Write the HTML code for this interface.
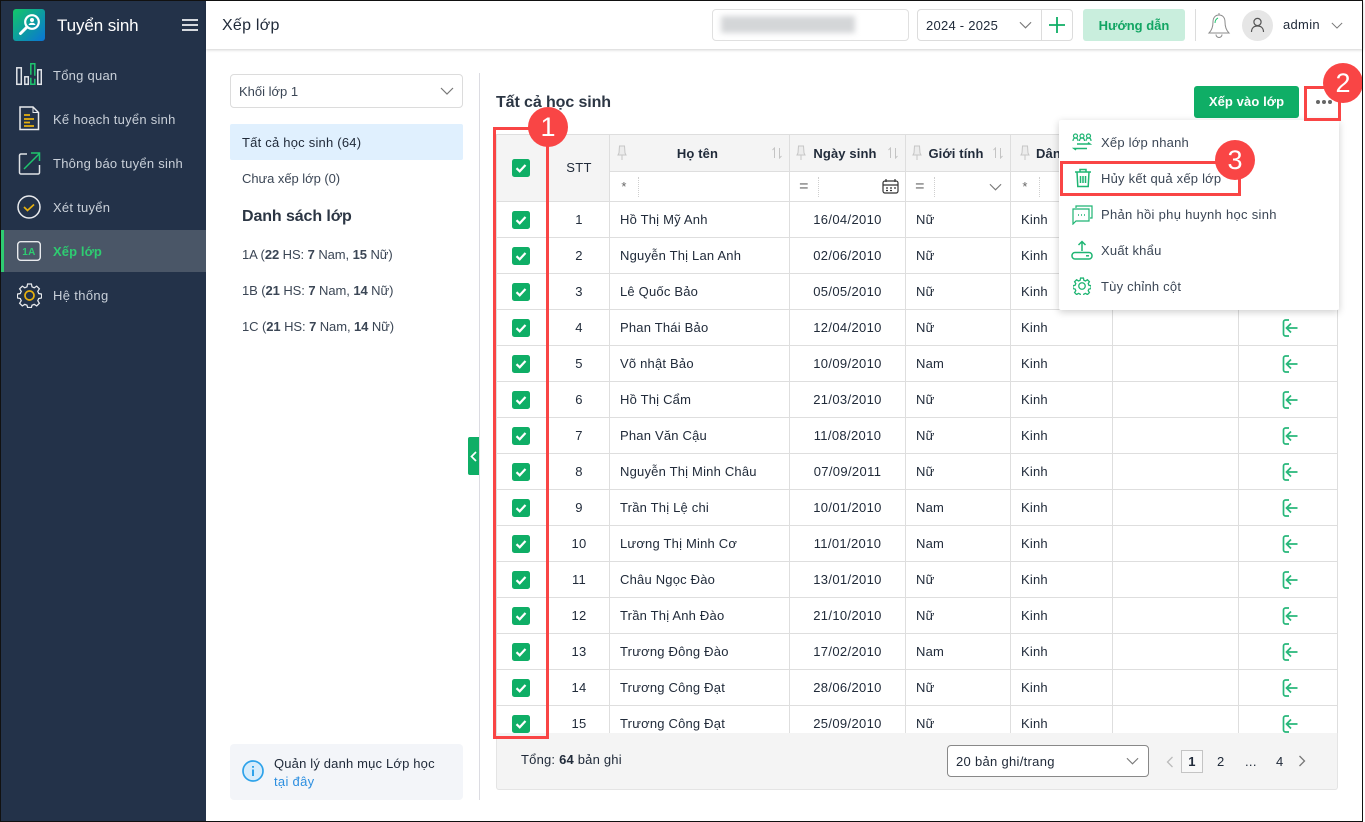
<!DOCTYPE html>
<html lang="vi"><head><meta charset="utf-8"><title>Xếp lớp</title>
<style>
*{box-sizing:border-box}
html,body{margin:0;padding:0;background:#fff}
body{width:1365px;height:822px;position:relative;overflow:hidden;font:13px/24px "Liberation Sans","Noto Sans CJK SC",sans-serif;color:#212b3a;letter-spacing:.3px}
.a{position:absolute;white-space:nowrap}
.side{left:1px;top:1px;width:205px;height:820px;background:#233249}
.nav{left:53px;color:#c9d0d9;letter-spacing:.25px}
table{border-collapse:separate;border-spacing:0;table-layout:fixed;width:841px;position:absolute;left:0;top:0}
td,th{border-right:1px solid #dedede;border-bottom:1px solid #dedede;padding:0;font-weight:400;height:36px;position:relative;white-space:nowrap;overflow:hidden}
th{background:#f4f4f4;height:37px}
th b{position:relative;top:1px;letter-spacing:.12px}
td.c{text-align:center}
td.p{padding-left:10px;letter-spacing:.2px}
td.d{text-align:center;letter-spacing:.35px}
td svg,th svg{position:absolute}
tr.f td{height:30px;color:#666}
.op{position:absolute;left:0;top:5px;width:29px;height:20px;line-height:20px;text-align:center;border-right:1px dotted #cfcfcf}
.eq{font-size:16px}
.red{position:absolute;border:3px solid #f94545;z-index:20}
.num{position:absolute;width:40px;height:40px;border-radius:50%;background:#f94545;color:#fff;font-size:27px;line-height:40px;text-align:center;z-index:21;letter-spacing:0}
.m{left:1101px;color:#3b4655;letter-spacing:.22px}
.pin{left:6px;top:10px}
.srt{top:12px}
.l{color:#3b4655;letter-spacing:0}
</style></head><body>
<svg width="0" height="0" style="position:absolute"><defs>
<symbol id="ck" viewBox="0 0 18 18"><rect width="18" height="18" rx="2.5" fill="#0fae66"/><path d="M4.5 9.2 7.7 12.3 13.5 6" fill="none" stroke="#fff" stroke-width="2.2"/></symbol>
<symbol id="ex" viewBox="0 0 16 18"><path d="M7 1H3.5A2 2 0 0 0 1.5 3v12a2 2 0 0 0 2 2H7M15.5 9H4.5M9 4.5 4.5 9 9 13.5" fill="none" stroke="#27b77a" stroke-width="1.7"/></symbol>
<symbol id="pn" viewBox="0 0 10 16"><path d="M2.5 1h5l.5 7 1 2H1l1-2zM5 10v5" fill="#ececec" stroke="#c6c6c6"/></symbol>
<symbol id="so" viewBox="0 0 12 12"><path d="M3.500 11V1L1.500 3M8.500 1v10l2-2" fill="none" stroke="#c4c4c4"/></symbol>
<symbol id="dn" viewBox="0 0 14 8"><path d="M1 1l6 6 6-6" fill="none" stroke="#777" stroke-width="1.200"/></symbol>
</defs></svg>

<div class="a" style="left:0;top:0;width:1363px;height:822px;border:1px solid #111;z-index:30;pointer-events:none"></div>

<!-- sidebar -->
<div class="a side"></div>
<svg class="a" style="left:13px;top:9px" width="32" height="32" viewBox="0 0 32 32"><defs><linearGradient id="lg" x1="0" y1="0" x2="1" y2="1"><stop offset="0" stop-color="#12c768"/><stop offset="1" stop-color="#0a74d6"/></linearGradient></defs><rect width="32" height="32" rx="3" fill="url(#lg)"/><circle cx="19" cy="13" r="6.800" fill="none" stroke="#fff" stroke-width="2.200"/><circle cx="19" cy="11" r="2" fill="#fff"/><path d="M15.500 16a3.600 3 0 0 1 7 0z" fill="#fff"/><path d="M14 18 7.500 24.500" stroke="#fff" stroke-width="3" stroke-linecap="round"/></svg>
<div class="a" style="left:57px;top:15px;font-size:17px;line-height:22px;color:#fff;letter-spacing:-.1px">Tuyển sinh</div>
<svg class="a" style="left:181px;top:18px" width="18" height="14"><path d="M1 2h16M1 7h16M1 12h16" stroke="#d5d9df" stroke-width="2"/></svg>

<svg class="a" style="left:16px;top:62px" width="26" height="24" fill="none" stroke="#e2e5e9" stroke-width="1.500"><rect x=".8" y="5.800" width="4.500" height="16.500"/><rect x="8.800" y="14.800" width="3.500" height="7.500"/><rect x="14.800" y="1.800" width="4" height="20.500" stroke="#1fc46e" stroke-dasharray="16 3"/><rect x="21.800" y="7.800" width="3.500" height="14.500"/></svg>
<div class="a nav" style="top:64px">Tổng quan</div>
<svg class="a" style="left:19px;top:106px" width="21" height="25" fill="none"><path d="M1 1h13l5.500 5.500V23.500H1z" stroke="#e8eaed" stroke-width="1.500"/><path d="M14 1v5.500h5.500" stroke="#e8eaed"/><path d="M5 9h6M5 13h10M5 16.500h6M5 20h10" stroke="#e8b10f" stroke-width="1.700"/></svg>
<div class="a nav" style="top:108px">Kế hoạch tuyển sinh</div>
<svg class="a" style="left:18px;top:151px" width="23" height="24" fill="none"><path d="M9 3H3a1.500 1.500 0 0 0-1.500 1.500v17A1.500 1.500 0 0 0 3 23h17a1.500 1.500 0 0 0 1.500-1.500V14" stroke="#dfe2e6" stroke-width="1.500"/><path d="M6 18 21 3M13 2h8.500v8" stroke="#1fc46e" stroke-width="1.500"/></svg>
<div class="a nav" style="top:152px">Thông báo tuyển sinh</div>
<svg class="a" style="left:17px;top:195px" width="24" height="24" fill="none"><circle cx="12" cy="12" r="11" stroke="#e8eaed" stroke-width="1.500"/><path d="M7 12l3.500 3.500L17 9.500" stroke="#e8b10f" stroke-width="1.700"/></svg>
<div class="a nav" style="top:196px">Xét tuyển</div>
<div class="a" style="left:1px;top:230px;width:205px;height:42px;background:#4a5667"></div>
<div class="a" style="left:1px;top:230px;width:3px;height:42px;background:#2ecc71"></div>
<svg class="a" style="left:17px;top:241px" width="24" height="21"><rect x=".7" y=".7" width="22.600" height="18.600" rx="3" fill="none" stroke="#e8eaed" stroke-width="1.400"/><text x="12" y="14" text-anchor="middle" font-family="Liberation Sans" font-size="10" font-weight="700" fill="#2ecc71">1A</text></svg>
<div class="a" style="left:53px;top:240px;color:#2ecc71;font-weight:700;letter-spacing:.1px">Xếp lớp</div>
<svg class="a" style="left:17px;top:283px" width="25" height="25" viewBox="0 0 25 25" fill="none"><path d="M10.500 1.500h4l.6 3 2.300 1 2.600-1.700 2.800 2.800-1.700 2.600 1 2.300 3 .6v4l-3 .6-1 2.300 1.700 2.600-2.800 2.800-2.600-1.700-2.300 1-.6 2.300h-4l-.6-2.300-2.300-1-2.600 1.700-2.800-2.800 1.700-2.600-1-2.300-3-.6v-4l3-.6 1-2.300L2.200 6.600 5 3.800l2.600 1.700 2.300-1z" transform="translate(.5 -.5) scale(.96)" stroke="#e8eaed" stroke-width="1.300"/><circle cx="12.500" cy="12.500" r="4.500" stroke="#e8b10f" stroke-width="1.700"/></svg>
<div class="a nav" style="top:284px;letter-spacing:.35px">Hệ thống</div>

<!-- header -->
<div class="a" style="left:206px;top:1px;width:1157px;height:48px;background:#fff;box-shadow:0 1px 3px rgba(0,0,0,.18);z-index:2"></div>
<div style="position:absolute;z-index:3;left:0;top:0">
<div class="a" style="left:222px;top:15px;font-size:16px;line-height:22px;letter-spacing:.25px">Xếp lớp</div>
<div class="a" style="left:712px;top:9px;width:197px;height:32px;border:1px solid #e0e0e0;border-radius:4px"></div>
<div class="a" style="left:721px;top:16px;width:134px;height:17px;background:#d4d6d8;filter:blur(3px)"></div>
<div class="a" style="left:917px;top:9px;width:156px;height:32px;border:1px solid #dcdcdc;border-radius:4px"></div>
<div class="a" style="left:1041px;top:9px;width:1px;height:32px;background:#dcdcdc"></div>
<div class="a" style="left:926px;top:14px;letter-spacing:.25px">2024 - 2025</div>
<svg class="a" style="left:1019px;top:21px" width="13" height="8"><use href="#dn"/></svg>
<svg class="a" style="left:1049px;top:17px" width="16" height="16"><path d="M8 0v16M0 8h16" stroke="#0fae66" stroke-width="1.800"/></svg>
<div class="a" style="left:1083px;top:9px;width:102px;height:32px;background:#c9eedd;border-radius:3px;color:#12a563;text-align:center;line-height:33px;font-weight:700;letter-spacing:0">Hướng dẫn</div>
<div class="a" style="left:1195px;top:9px;width:1px;height:32px;background:#dcdcdc"></div>
<svg class="a" style="left:1207px;top:12px" width="24" height="27" fill="none" stroke="#8b8b8b"><path d="M12 1v2M12 3c-4 0-6 3-6 7 0 5-1 8-4 11h20c-3-3-4-6-4-11 0-4-2-7-6-7zM9 22.500a3 3 0 0 0 6 0"/><path d="M8 11c0-2 1-4 3-5" stroke="#1fc46e"/></svg>
<div class="a" style="left:1242px;top:10px;width:31px;height:31px;border-radius:50%;background:#e6e6e6"></div>
<svg class="a" style="left:1250px;top:17px" width="15" height="16" fill="none" stroke="#555" stroke-width="1.200"><circle cx="7.500" cy="5" r="3.600"/><path d="M1.500 15c0-4 2.500-6 6-6s6 2 6 6"/></svg>
<div class="a" style="left:1283px;top:13px">admin</div>
<svg class="a" style="left:1331px;top:22px" width="12" height="7"><use href="#dn"/></svg>
</div>

<!-- left panel -->
<div class="a" style="left:230px;top:74px;width:233px;height:34px;border:1px solid #dcdcdc;border-radius:4px"></div>
<div class="a l" style="left:239px;top:80px">Khối lớp 1</div>
<svg class="a" style="left:440px;top:87px" width="14" height="8"><use href="#dn"/></svg>
<div class="a" style="left:230px;top:124px;width:233px;height:36px;background:#e0f0fe;border-radius:2px"></div>
<div class="a" style="left:242px;top:131px;letter-spacing:.22px">Tất cả học sinh (64)</div>
<div class="a l" style="left:242px;top:167px;letter-spacing:-.05px">Chưa xếp lớp (0)</div>
<div class="a" style="left:242px;top:206px;font-size:16px;line-height:22px;font-weight:700;letter-spacing:-.1px;color:#2c3644">Danh sách lớp</div>
<div class="a l" style="left:242px;top:243px;letter-spacing:-.08px">1A (<b>22</b> HS: <b>7</b> Nam, <b>15</b> Nữ)</div>
<div class="a l" style="left:242px;top:279px;letter-spacing:-.08px">1B (<b>21</b> HS: <b>7</b> Nam, <b>14</b> Nữ)</div>
<div class="a l" style="left:242px;top:315px;letter-spacing:-.08px">1C (<b>21</b> HS: <b>7</b> Nam, <b>14</b> Nữ)</div>
<div class="a" style="left:230px;top:744px;width:233px;height:56px;background:#f3f5f9;border-radius:4px"></div>
<svg class="a" style="left:241px;top:759px" width="24" height="24"><circle cx="12" cy="12" r="10" fill="#d7ecfb" stroke="#2da2ea" stroke-width="1.700"/><path d="M12 10.500v6.500M12 7v1.800" stroke="#2da2ea" stroke-width="2"/></svg>
<div class="a" style="left:274px;top:752px;letter-spacing:.17px">Quản lý danh mục Lớp học</div>
<div class="a" style="left:274px;top:770px;color:#2d8fe0">tại đây</div>
<div class="a" style="left:479px;top:73px;width:1px;height:727px;background:#dcdce2"></div>
<div class="a" style="left:468px;top:437px;width:11px;height:38px;background:#0fae66;border-radius:2px 0 0 2px"></div>
<svg class="a" style="left:470px;top:451px" width="7" height="11"><path d="M6 1 1.500 5.500 6 10" fill="none" stroke="#fff" stroke-width="1.700"/></svg>

<!-- main -->
<div class="a" style="left:496px;top:92px;font-size:16px;line-height:22px;font-weight:700;letter-spacing:-.1px;color:#2c3644">Tất cả học sinh</div>
<div class="a" style="left:1194px;top:86px;width:105px;height:32px;background:#0fae66;border-radius:3px;color:#fff;font-weight:700;text-align:center;line-height:32px;letter-spacing:.1px">Xếp vào lớp</div>
<div class="a" style="left:1304px;top:86px;width:36px;height:34px;border:1px solid #ddd;border-radius:3px"></div>
<svg class="a" style="left:1315px;top:99px" width="18" height="6"><g fill="#666"><circle cx="3" cy="3" r="2"/><circle cx="9" cy="3" r="2"/><circle cx="15" cy="3" r="2"/></g></svg>

<div class="a" style="left:496px;top:134px;width:842px;height:599px;overflow:hidden;border-left:1px solid #dedede;border-top:1px solid #dedede">
<table>
<colgroup><col style="width:52px"><col style="width:61px"><col style="width:180px"><col style="width:116px"><col style="width:105px"><col style="width:102px"><col style="width:126px"><col style="width:99px"></colgroup>
<tr>
<th rowspan="2"><svg style="left:15px;top:24px" width="18" height="18"><use href="#ck"/></svg></th>
<th rowspan="2">STT</th>
<th><svg class="pin" width="10" height="16" style="left:7px"><use href="#pn"/></svg><b style="margin-right:4px">Họ tên</b><svg class="srt" style="right:6px" width="12" height="12"><use href="#so"/></svg></th>
<th><svg class="pin" width="10" height="16"><use href="#pn"/></svg><b style="margin-right:5px">Ngày sinh</b><svg class="srt" style="right:6px" width="12" height="12"><use href="#so"/></svg></th>
<th><svg class="pin" width="10" height="16"><use href="#pn"/></svg><b style="margin-right:4px">Giới tính</b><svg class="srt" style="right:6px" width="12" height="12"><use href="#so"/></svg></th>
<th style="text-align:left"><svg class="pin" width="10" height="16" style="left:9px"><use href="#pn"/></svg><b style="margin-left:25px">Dân tộc</b></th>
<th></th><th></th>
</tr>
<tr class="f">
<td><div class="op">*</div></td>
<td><div class="op eq">=</div><svg style="right:6px;top:7px" width="17" height="15" fill="none" stroke="#333" stroke-width="1.200"><rect x="1" y="2" width="15" height="12" rx="2"/><path d="M1 6h15M4 0v3M13 0v3M4 9h2M8 9h2M12 9h2M4 11.500h2M8 11.500h2"/></svg></td>
<td><div class="op eq">=</div><svg style="right:8px;top:11px" width="13" height="8"><use href="#dn"/></svg></td>
<td><div class="op">*</div></td>
<td></td><td></td>
</tr>
<tr><td><svg style="left:15px;top:9px" width="18" height="18"><use href="#ck"/></svg></td><td class="c">1</td><td class="p">Hồ Thị Mỹ Anh</td><td class="d">16/04/2010</td><td class="p">Nữ</td><td class="p">Kinh</td><td></td><td><svg style="left:43px;top:9px" width="16" height="18"><use href="#ex"/></svg></td></tr>
<tr><td><svg style="left:15px;top:9px" width="18" height="18"><use href="#ck"/></svg></td><td class="c">2</td><td class="p">Nguyễn Thị Lan Anh</td><td class="d">02/06/2010</td><td class="p">Nữ</td><td class="p">Kinh</td><td></td><td><svg style="left:43px;top:9px" width="16" height="18"><use href="#ex"/></svg></td></tr>
<tr><td><svg style="left:15px;top:9px" width="18" height="18"><use href="#ck"/></svg></td><td class="c">3</td><td class="p">Lê Quốc Bảo</td><td class="d">05/05/2010</td><td class="p">Nữ</td><td class="p">Kinh</td><td></td><td><svg style="left:43px;top:9px" width="16" height="18"><use href="#ex"/></svg></td></tr>
<tr><td><svg style="left:15px;top:9px" width="18" height="18"><use href="#ck"/></svg></td><td class="c">4</td><td class="p">Phan Thái Bảo</td><td class="d">12/04/2010</td><td class="p">Nữ</td><td class="p">Kinh</td><td></td><td><svg style="left:43px;top:9px" width="16" height="18"><use href="#ex"/></svg></td></tr>
<tr><td><svg style="left:15px;top:9px" width="18" height="18"><use href="#ck"/></svg></td><td class="c">5</td><td class="p">Võ nhật Bảo</td><td class="d">10/09/2010</td><td class="p">Nam</td><td class="p">Kinh</td><td></td><td><svg style="left:43px;top:9px" width="16" height="18"><use href="#ex"/></svg></td></tr>
<tr><td><svg style="left:15px;top:9px" width="18" height="18"><use href="#ck"/></svg></td><td class="c">6</td><td class="p">Hồ Thị Cẩm</td><td class="d">21/03/2010</td><td class="p">Nữ</td><td class="p">Kinh</td><td></td><td><svg style="left:43px;top:9px" width="16" height="18"><use href="#ex"/></svg></td></tr>
<tr><td><svg style="left:15px;top:9px" width="18" height="18"><use href="#ck"/></svg></td><td class="c">7</td><td class="p">Phan Văn Cậu</td><td class="d">11/08/2010</td><td class="p">Nữ</td><td class="p">Kinh</td><td></td><td><svg style="left:43px;top:9px" width="16" height="18"><use href="#ex"/></svg></td></tr>
<tr><td><svg style="left:15px;top:9px" width="18" height="18"><use href="#ck"/></svg></td><td class="c">8</td><td class="p">Nguyễn Thị Minh Châu</td><td class="d">07/09/2011</td><td class="p">Nữ</td><td class="p">Kinh</td><td></td><td><svg style="left:43px;top:9px" width="16" height="18"><use href="#ex"/></svg></td></tr>
<tr><td><svg style="left:15px;top:9px" width="18" height="18"><use href="#ck"/></svg></td><td class="c">9</td><td class="p">Trần Thị Lệ chi</td><td class="d">10/01/2010</td><td class="p">Nam</td><td class="p">Kinh</td><td></td><td><svg style="left:43px;top:9px" width="16" height="18"><use href="#ex"/></svg></td></tr>
<tr><td><svg style="left:15px;top:9px" width="18" height="18"><use href="#ck"/></svg></td><td class="c">10</td><td class="p">Lương Thị Minh Cơ</td><td class="d">11/01/2010</td><td class="p">Nam</td><td class="p">Kinh</td><td></td><td><svg style="left:43px;top:9px" width="16" height="18"><use href="#ex"/></svg></td></tr>
<tr><td><svg style="left:15px;top:9px" width="18" height="18"><use href="#ck"/></svg></td><td class="c">11</td><td class="p">Châu Ngọc Đào</td><td class="d">13/01/2010</td><td class="p">Nữ</td><td class="p">Kinh</td><td></td><td><svg style="left:43px;top:9px" width="16" height="18"><use href="#ex"/></svg></td></tr>
<tr><td><svg style="left:15px;top:9px" width="18" height="18"><use href="#ck"/></svg></td><td class="c">12</td><td class="p">Trần Thị Anh Đào</td><td class="d">21/10/2010</td><td class="p">Nữ</td><td class="p">Kinh</td><td></td><td><svg style="left:43px;top:9px" width="16" height="18"><use href="#ex"/></svg></td></tr>
<tr><td><svg style="left:15px;top:9px" width="18" height="18"><use href="#ck"/></svg></td><td class="c">13</td><td class="p">Trương Đông Đào</td><td class="d">17/02/2010</td><td class="p">Nam</td><td class="p">Kinh</td><td></td><td><svg style="left:43px;top:9px" width="16" height="18"><use href="#ex"/></svg></td></tr>
<tr><td><svg style="left:15px;top:9px" width="18" height="18"><use href="#ck"/></svg></td><td class="c">14</td><td class="p">Trương Công Đạt</td><td class="d">28/06/2010</td><td class="p">Nữ</td><td class="p">Kinh</td><td></td><td><svg style="left:43px;top:9px" width="16" height="18"><use href="#ex"/></svg></td></tr>
<tr><td><svg style="left:15px;top:9px" width="18" height="18"><use href="#ck"/></svg></td><td class="c">15</td><td class="p">Trương Công Đạt</td><td class="d">25/09/2010</td><td class="p">Nữ</td><td class="p">Kinh</td><td></td><td><svg style="left:43px;top:9px" width="16" height="18"><use href="#ex"/></svg></td></tr>
</table>
</div>

<!-- footer -->
<div class="a" style="left:496px;top:733px;width:842px;height:57px;background:#f4f4f4;border:1px solid #e4e4e4;border-top:0;border-radius:0 0 3px 3px"></div>
<div class="a" style="left:521px;top:748px;letter-spacing:.2px">Tổng: <b>64</b> bản ghi</div>
<div class="a" style="left:947px;top:745px;width:202px;height:32px;border:1px solid #888;border-radius:4px;background:#fff"></div>
<div class="a" style="left:956px;top:750px">20 bản ghi/trang</div>
<svg class="a" style="left:1126px;top:757px" width="13" height="8"><use href="#dn"/></svg>
<svg class="a" style="left:1166px;top:756px" width="8" height="12"><path d="M6.500 1 1.500 6l5 5" fill="none" stroke="#bbb" stroke-width="1.300"/></svg>
<div class="a" style="left:1181px;top:750px;width:22px;height:23px;border:1px solid #c4c4c4;text-align:center;font-weight:700;line-height:22px;background:#f8f8f8">1</div>
<div class="a" style="left:1217px;top:750px">2</div>
<div class="a" style="left:1245px;top:750px">...</div>
<div class="a" style="left:1276px;top:750px">4</div>
<svg class="a" style="left:1298px;top:755px" width="8" height="12"><path d="M1.500 1l5 5-5 5" fill="none" stroke="#777" stroke-width="1.300"/></svg>

<!-- menu -->
<div class="a" style="left:1059px;top:120px;width:280px;height:190px;background:#fff;box-shadow:0 2px 8px rgba(0,0,0,.2);border-radius:2px;z-index:10"></div>
<div style="position:absolute;left:0;top:0;z-index:11">
<svg class="a" style="left:1072px;top:133px" width="20" height="19" fill="none" stroke="#1fb573" stroke-width="1.200"><circle cx="3.500" cy="3" r="2"/><circle cx="10" cy="3" r="2"/><circle cx="16.500" cy="3" r="2"/><path d="M1 8c0-2 1-3 2.500-3S6 6 6 8M7.500 8c0-2 1-3 2.500-3s2.500 1 2.500 3M14 8c0-2 1-3 2.500-3S19 6 19 8"/><path d="M5 11h13l-2-1.500M15 15.500H2l2 1.500" stroke-width="1.400"/></svg>
<div class="a m" style="top:131px">Xếp lớp nhanh</div>
<svg class="a" style="left:1074px;top:168px" width="18" height="20" fill="none" stroke="#1fb573" stroke-width="1.500"><path d="M1 4h16M6 4V1.500h6V4M3 4l.8 14.500h10.400L15 4M6.500 8v7M9 8v7M11.500 8v7"/></svg>
<div class="a m" style="top:167px">Hủy kết quả xếp lớp</div>
<svg class="a" style="left:1072px;top:205px" width="21" height="20" fill="none" stroke="#1fb573" stroke-width="1.200"><path d="M4 3V1h16v12h-2"/><path d="M1 4h16v12H4l-3 3z"/><path d="M6 10h1M9 10h1M12 10h1" stroke-width="1.400"/></svg>
<div class="a m" style="top:203px;letter-spacing:.3px">Phản hồi phụ huynh học sinh</div>
<svg class="a" style="left:1071px;top:240px" width="22" height="20" fill="none" stroke="#1fb573" stroke-width="1.500"><path d="M11 11V1.500M7.500 5 11 1.500 14.500 5"/><rect x="1" y="12.500" width="20" height="6.500" rx="3"/><path d="M15 15.800h3"/></svg>
<div class="a m" style="top:239px">Xuất khẩu</div>
<svg class="a" style="left:1073px;top:277px" width="18" height="18" viewBox="0 0 25 25" fill="none" stroke="#1fb573" stroke-width="1.800"><path d="M10.500 1.500h4l.6 3 2.300 1 2.600-1.700 2.800 2.800-1.700 2.600 1 2.300 3 .6v4l-3 .6-1 2.300 1.700 2.600-2.800 2.800-2.600-1.700-2.300 1-.6 2.300h-4l-.6-2.300-2.300-1-2.600 1.700-2.800-2.800 1.700-2.600-1-2.300-3-.6v-4l3-.6 1-2.300L2.200 6.600 5 3.800l2.600 1.700 2.300-1z"/><circle cx="12.500" cy="12.500" r="4.500"/></svg>
<div class="a m" style="top:275px">Tùy chỉnh cột</div>
</div>

<!-- annotations -->
<div class="red" style="left:493px;top:127px;width:56px;height:612px"></div>
<div class="num" style="left:528px;top:107px">1</div>
<div class="red" style="left:1304px;top:86px;width:37px;height:35px"></div>
<div class="num" style="left:1323px;top:63px">2</div>
<div class="red" style="left:1060px;top:161px;width:181px;height:35px"></div>
<div class="num" style="left:1215px;top:140px">3</div>
</body></html>
